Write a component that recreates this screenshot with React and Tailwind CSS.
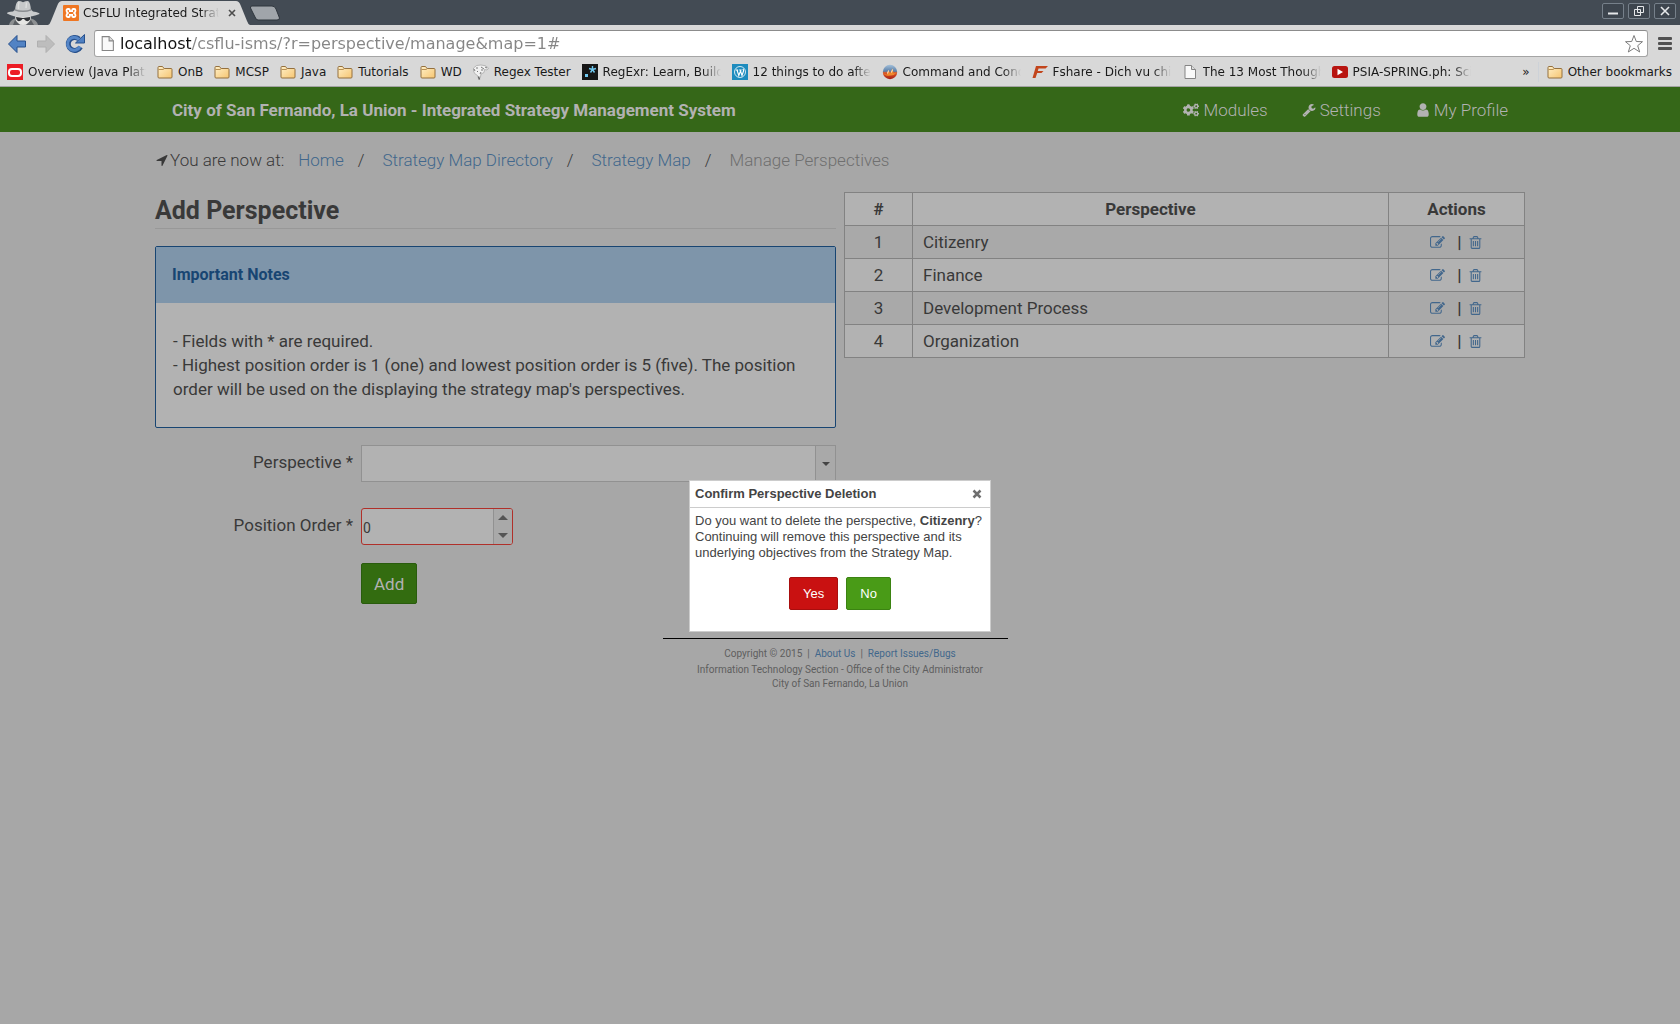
import { FaCogs } from "react-icons/fa";

const FA_PATHS = {
  user: "M1536 1399q0 109-62.5 187t-150.5 78h-854q-88 0-150.5-78t-62.5-187q0-85 8.5-160.5t31.5-152 58.5-131 94-89 134.5-34.5q131 128 313 128t313-128q76 0 134.5 34.5t94 89 58.5 131 31.5 152 8.5 160.5zm-256-887q0 159-112.5 271.5t-271.5 112.5-271.5-112.5-112.5-271.5 112.5-271.5 271.5-112.5 271.5 112.5 112.5 271.5z",
  trash: "M704 736v576q0 14-9 23t-23 9h-64q-14 0-23-9t-9-23v-576q0-14 9-23t23-9h64q14 0 23 9t9 23zm256 0v576q0 14-9 23t-23 9h-64q-14 0-23-9t-9-23v-576q0-14 9-23t23-9h64q14 0 23 9t9 23zm256 0v576q0 14-9 23t-23 9h-64q-14 0-23-9t-9-23v-576q0-14 9-23t23-9h64q14 0 23 9t9 23zm128 724v-948h-896v948q0 22 7 40.5t14.5 27 10.5 8.5h832q3 0 10.5-8.5t14.5-27 7-40.5zm-672-1076h448l-48-117q-7-9-17-11h-317q-10 2-17 11zm928 32v64q0 14-9 23t-23 9h-96v948q0 83-47 143.5t-113 60.5h-832q-66 0-113-58.5t-47-141.5v-952h-96q-14 0-23-9t-9-23v-64q0-14 9-23t23-9h309l70-167q15-37 54-63t79-26h320q40 0 79 26t54 63l70 167h309q14 0 23 9t9 23z",
  edit: "M888 1184l116-116-152-152-116 116v56h96v96h56zm440-720q-16-16-33 1l-350 350q-17 17-1 33t33-1l350-350q17-17 1-33zm80 594v190q0 119-84.5 203.5t-203.5 84.5h-832q-119 0-203.5-84.5t-84.5-203.5v-832q0-119 84.5-203.5t203.5-84.5h832q63 0 117 25 15 7 18 23 3 17-9 29l-49 49q-14 14-32 8-23-6-45-6h-832q-66 0-113 47t-47 113v832q0 66 47 113t113 47h832q66 0 113-47t47-113v-126q0-13 9-22l64-64q15-15 35-7t20 29zm-96-738l288 288-672 672h-288v-288zm444 132l-92 92-288-288 92-92q28-28 68-28t68 28l152 152q28 28 28 68t-28 68z",
  arrow: "M1593 349l-640 1280q-17 35-57 35-5 0-15-2-22-5-35.5-22.5t-13.5-39.5v-576h-576q-22 0-39.5-13.5t-22.5-35.5 4-42 29-30l1280-640q13-7 29-7 27 0 45 19 15 14 18.5 34.5t-6.5 39.5z",
  wrench: "M448 1472q0-26-19-45t-45-19-45 19-19 45 19 45 45 19 45-19 19-45zm644-420l-682 682q-37 37-90 37-52 0-91-37l-106-108q-38-36-38-90 0-53 38-91l681-681q39 98 114.5 173.5t173.5 114.5zm634-435q0 39-23 106-47 134-164.5 217.5t-258.5 83.5q-185 0-316.5-131.5t-131.5-316.5 131.5-316.5 316.5-131.5q58 0 121.5 16.5t107.5 46.5q16 11 16 28t-16 28l-293 169v224l193 107q5-3 79-48.5t135.5-81 70.5-35.5q15 0 23.5 10t8.5 25z",
};

function Fa({ name, className }) {
  return (
    <svg viewBox="0 0 1792 1792" fill="currentColor" aria-hidden="true" className={className}>
      <path d={FA_PATHS[name]} />
    </svg>
  );
}

function Incognito() {
  return (
    <svg viewBox="0 0 34 25" aria-hidden="true" className="h-[25px] w-[34px]">
      <path d="M3 25 Q4 20 9 18.500 L9 14 H25 V18.500 Q31 20 32 25 Z" fill="#8d9092" />
      <path d="M9.500 14 H24.500 V19 Q23 25 17 25 Q11 25 9.500 19 Z" fill="#e6e6e4" />
      <path d="M9 11 Q9.500 2 12.500 1 Q14.500 0.800 17 2.200 Q20 0.800 22 1 Q24.500 2 25 11 Z" fill="#c6c8c9" />
      <path d="M13 2 Q12 5 12.500 9 M20.500 2.500 L20 8" stroke="#dcdddd" strokeWidth="1.500" fill="none" />
      <path d="M8.500 10 Q17 12.500 25.500 10 L27 11.500 Q34 12.500 33.500 14 Q27 17 17 17 Q7 17 1 13.500 Q0.500 12 7 11.500 Z" fill="#c9cbcc" />
      <path d="M8.500 9 Q17 12 25.500 9 L25.500 10.500 Q17 13.500 8.500 10.500 Z" fill="#8a8d90" />
      <path d="M10 17 L17 18 L24 17 L24 19.500 Q22 22.500 19.500 20.500 L18 19 H16.500 L15 20.500 Q12 22.500 10.500 19.500 Z" fill="#2e3135" />
      <path d="M9 20 L14 25 H7 Z M25 20 L20 25 H28 Z" fill="#5b5f63" />
    </svg>
  );
}

function Xampp() {
  return (
    <svg viewBox="0 0 16 16" aria-hidden="true" className="size-4 shrink-0">
      <rect width="16" height="16" rx="1" fill="#ef7622" />
      <path d="M5 4 h0.800 q1 0 1 1 v1.200 h2.400 V5 q0-1 1-1 h1 q1.300 0 1.300 1.500 t-1.300 2.500 q1.300 1 1.300 2.500 t-1.300 1.500 h-1 q-1 0-1-1 V9.800 H6.800 V11 q0 1-1 1 H5 q-1.500 0-1.500-1.500 T4.800 8 Q3.500 7 3.500 5.500 T5 4 Z" fill="none" stroke="#fff" strokeWidth="1.800" />
    </svg>
  );
}

function Oracle() {
  return (
    <svg viewBox="0 0 16 16" aria-hidden="true" className="size-4 shrink-0">
      <rect width="16" height="16" fill="#ec1c24" />
      <rect x="2" y="5" width="12" height="7" rx="3" fill="none" stroke="#fff" strokeWidth="2" />
    </svg>
  );
}

function Folder() {
  return (
    <svg viewBox="0 0 16 16" aria-hidden="true" className="size-4 shrink-0">
      <defs>
        <linearGradient id="folderFill" x1="0" y1="0" x2="1" y2="1">
          <stop offset="0" stopColor="#fff0c8" />
          <stop offset="1" stopColor="#f6c571" />
        </linearGradient>
      </defs>
      <path d="M1 13 V3.500 Q1 2.500 2 2.500 H5.500 L7 4.500 H14 Q15 4.500 15 5.500 V13 Q15 14 14 14 H2 Q1 14 1 13 Z" fill="url(#folderFill)" stroke="#94703f" />
      <path d="M1.500 5.500 H6 L7.500 4.500" fill="none" stroke="#b88f52" />
    </svg>
  );
}

function PageIcon({ className = "size-4" }) {
  return (
    <svg viewBox="0 0 16 16" aria-hidden="true" className={`shrink-0 ${className}`}>
      <path d="M3 1.500 H9.500 L13.500 5.500 V14.500 H3 Z" fill="#f9f9f9" stroke="#858585" />
      <path d="M9.500 1.500 V5.500 H13.500" fill="#ddd" stroke="#858585" />
    </svg>
  );
}

function RegexTester() {
  return (
    <svg viewBox="0 0 16 16" aria-hidden="true" className="size-4 shrink-0">
      <path d="M0.500 4 Q3 0.500 8 1 Q13 1 15.500 4 L14 6 L11.500 5.500 L11 8.500 L8 10 L7.500 13 L6 15.500 L4.500 11.500 Q1 10 0.500 7 Z" fill="#f1f1f1" stroke="#a8a8a8" strokeWidth="0.800" />
      <path d="M3 4 h2 M8 3 l3 2 M4 7 l1 1 M8 6 h2 M1 5 l1 2 M8 8 l-1 2 M12 3 l2 1" stroke="#7a7a7a" fill="none" />
      <path d="M5.500 12.500 L6.500 15.500" stroke="#666" strokeWidth="1.500" />
    </svg>
  );
}

function RegExr() {
  return (
    <svg viewBox="0 0 16 16" aria-hidden="true" className="size-4 shrink-0">
      <rect width="16" height="16" fill="#161616" />
      <rect x="3" y="10" width="3" height="3" fill="#70c8ef" />
      <path d="M10.500 2 V5.500 L7 4.500 M10.500 5.500 L14 4.500 M10.500 5.500 L8.500 8.500 M10.500 5.500 L12.500 8.500" fill="none" stroke="#70c8ef" strokeWidth="1.400" />
    </svg>
  );
}

function WordPress() {
  return (
    <svg viewBox="0 0 16 16" aria-hidden="true" className="size-4 shrink-0">
      <rect width="16" height="16" fill="#1e8cbe" />
      <circle cx="8" cy="8" r="5.500" fill="none" stroke="#fff" strokeWidth="0.800" />
      <path d="M3.800 6 H6.200 M5 6 L6.800 11.500 L8.300 7.500 M7.200 6 H9.600 M8.400 6.500 L10 11.500 L11.600 6.800 Q11.600 5.800 10.800 5" fill="none" stroke="#fff" strokeWidth="1.100" />
    </svg>
  );
}

function CommandIcon() {
  return (
    <svg viewBox="0 0 16 16" aria-hidden="true" className="size-4 shrink-0">
      <defs>
        <linearGradient id="ballFill" x1="0" y1="0" x2="0" y2="1">
          <stop offset="0" stopColor="#a3c0da" />
          <stop offset="0.450" stopColor="#5b7fa8" />
          <stop offset="0.550" stopColor="#dd5a26" />
          <stop offset="1" stopColor="#a81e14" />
        </linearGradient>
      </defs>
      <circle cx="8" cy="8" r="7.200" fill="url(#ballFill)" />
      <path d="M1.500 9 Q3 11 5 10.500 L6.500 6 L8 9.500 L10.500 4.500 L11.500 9.500 L14.500 8.500 Q12 12 8 11.500 Q3 12.500 1.500 9 Z" fill="#f08a2c" />
      <path d="M5.500 9.500 L6.500 6.500 M9.500 8.500 L10.500 5.500" stroke="#fdf0d8" />
    </svg>
  );
}

function Fshare() {
  return (
    <svg viewBox="0 0 16 16" aria-hidden="true" className="size-4 shrink-0">
      <path d="M4 2 H16 L13.500 4.500 H6.500 L5.800 7 H11.500 L9.500 9 H5.200 L3.500 14 H0.500 Z" fill="#c2451c" />
    </svg>
  );
}

function YouTube() {
  return (
    <svg viewBox="0 0 16 16" aria-hidden="true" className="size-4 shrink-0">
      <rect y="2" width="16" height="12" rx="2.500" fill="#b81410" />
      <path d="M5.500 4.800 L11 8 L5.500 11.200 Z" fill="#fff" />
    </svg>
  );
}

const BOOKMARKS = [
  { label: "Overview (Java Platf", Icon: Oracle, long: true },
  { label: "OnB", Icon: Folder },
  { label: "MCSP", Icon: Folder },
  { label: "Java", Icon: Folder },
  { label: "Tutorials", Icon: Folder },
  { label: "WD", Icon: Folder },
  { label: "Regex Tester", Icon: RegexTester },
  { label: "RegExr: Learn, Build", Icon: RegExr, long: true },
  { label: "12 things to do after", Icon: WordPress, long: true },
  { label: "Command and Conq", Icon: CommandIcon, long: true },
  { label: "Fshare - Dich vu chi", Icon: Fshare, long: true },
  { label: "The 13 Most Though", Icon: PageIcon, long: true },
  { label: "PSIA-SPRING.ph: Sci", Icon: YouTube, long: true },
];

function Bookmark({ label, Icon, long }) {
  return (
    <a href="#" className="flex shrink-0 items-center gap-[5px]">
      <Icon />
      <span
        className={
          long
            ? "w-[118px] overflow-hidden whitespace-nowrap [mask-image:linear-gradient(to_right,#000_85%,transparent)]"
            : "whitespace-nowrap"
        }
      >
        {label}
      </span>
    </a>
  );
}

function WindowButton({ label, children }) {
  return (
    <button type="button" aria-label={label} className="flex h-4 w-[22px] items-center justify-center rounded-[2px] border border-[#76808a] bg-[#3d454e]">
      <svg viewBox="0 0 12 12" fill="none" stroke="#e6e8ea" aria-hidden="true" className="size-3">
        {children}
      </svg>
    </button>
  );
}

function BlueArrow({ forward }) {
  return (
    <svg viewBox="0 0 20 20" aria-hidden="true" className="size-5">
      <path
        d={forward ? "M1.500 7 H10 V1.500 L18.500 10 L10 18.500 V13 H1.500 Z" : "M18.500 7 H10 V1.500 L1.500 10 L10 18.500 V13 H18.500 Z"}
        fill={forward ? "#bdbdbd" : "#5283c4"}
        stroke={forward ? "#b0b0b0" : "#27508c"}
      />
    </svg>
  );
}

function Browser() {
  return (
    <div className="bg-[#d8d8d8] font-['DejaVu_Sans',sans-serif] text-[12px] leading-4 text-[#1a1a1a]">
      <div className="flex h-[25px] items-start bg-[#434b54]">
        <div className="ml-[6px] w-[42px]">
          <Incognito />
        </div>
        <div className="flex h-[25px] pt-px">
          <svg viewBox="0 0 14 24" preserveAspectRatio="none" aria-hidden="true" className="h-6 w-[14px]">
            <path d="M0 24 Q2 23 3 20 L9.500 4 Q11 0 14 0 V24 Z" fill="#d8d8d8" />
          </svg>
          <div className="flex items-center gap-1 bg-[#d8d8d8] pl-px">
            <Xampp />
            <span className="w-[136px] overflow-hidden whitespace-nowrap [mask-image:linear-gradient(to_right,#000_86%,transparent)]">CSFLU Integrated Strat</span>
            <button type="button" aria-label="Close tab" className="ml-[5px] flex size-2 items-center justify-center">
              <svg viewBox="0 0 8 8" stroke="#4c4c4c" strokeWidth="1.600" aria-hidden="true" className="size-2">
                <path d="M1 1 L7 7 M7 1 L1 7" />
              </svg>
            </button>
          </div>
          <svg viewBox="0 0 14 24" preserveAspectRatio="none" aria-hidden="true" className="h-6 w-[14px]">
            <path d="M14 24 Q12 23 11 20 L4.500 4 Q3 0 0 0 V24 Z" fill="#d8d8d8" />
          </svg>
        </div>
        <button type="button" aria-label="New tab" className="mt-[5px]">
          <svg viewBox="0 0 30 16" aria-hidden="true" className="h-4 w-[30px]">
            <path d="M2 1 H22 Q25 1 26 4 L29.500 13 Q29.500 15 27 15 H8 Q6 15 5 12 L0.500 3 Q0 1 2 1 Z" fill="#a0a5aa" stroke="#2f363d" />
          </svg>
        </button>
        <div className="mt-[3px] mr-1 ml-auto flex gap-1">
          <WindowButton label="Minimize">
            <path d="M1 8.500 H11" strokeWidth="2" />
          </WindowButton>
          <WindowButton label="Restore">
            <path d="M4.500 1.500 H10.500 V7.500 H4.500 Z M1.500 4.500 H7.500 V10.500 H1.500 Z" />
          </WindowButton>
          <WindowButton label="Close">
            <path d="M2 2 L10 10 M10 2 L2 10" strokeWidth="1.600" />
          </WindowButton>
        </div>
      </div>
      <div className="flex items-center pt-[5px] pr-2 pl-[7px]">
        <div className="flex items-center gap-[9px]">
          <button type="button" aria-label="Back"><BlueArrow /></button>
          <button type="button" aria-label="Forward"><BlueArrow forward /></button>
          <button type="button" aria-label="Reload">
            <svg viewBox="0 0 20 20" aria-hidden="true" className="size-5">
              <path d="M15.500 13 A6.500 6.500 0 1 1 14 5" fill="none" stroke="#27508c" strokeWidth="5" />
              <path d="M19.500 0.500 V9 H10.500 Z" fill="#4f80c2" stroke="#27508c" />
              <path d="M15 12.500 A6.500 6.500 0 1 1 14 5.500" fill="none" stroke="#5586c7" strokeWidth="3" />
            </svg>
          </button>
        </div>
        <div className="ml-[9px] flex h-[27px] min-w-0 flex-1 items-center rounded-[3px] border border-[#a5a5a5] border-t-[#8c8c8c] bg-white pr-[3px] pl-1">
          <PageIcon className="size-[17px]" />
          <input
            aria-label="Address"
            defaultValue="localhost/csflu-isms/?r=perspective/manage&map=1#"
            className="ml-1 min-w-0 flex-1 bg-[linear-gradient(to_right,#111_71px,#858585_71px)] bg-clip-text text-[16px] leading-6 text-transparent outline-none"
          />
          <button type="button" aria-label="Bookmark this page">
            <svg viewBox="0 0 20 20" aria-hidden="true" className="size-5">
              <path d="M10 1.500 L12.300 7.500 L18.500 7.700 L13.700 11.700 L15.700 18 L10 14.300 L4.300 18 L6.300 11.700 L1.500 7.700 L7.700 7.500 Z" fill="#fff" stroke="#7c7c7c" strokeLinejoin="round" />
            </svg>
          </button>
        </div>
        <button type="button" aria-label="Menu" className="ml-[10px] flex w-[14px] flex-col gap-[2px]">
          <span className="h-[3px] rounded-[1px] bg-[#515151]" />
          <span className="h-[3px] rounded-[1px] bg-[#515151]" />
          <span className="h-[3px] rounded-[1px] bg-[#515151]" />
        </button>
      </div>
      <div className="flex h-[30px] items-center gap-[11px] border-b border-[#a3a3a3] pr-2 pl-[7px]">
        {BOOKMARKS.map((b) => (
          <Bookmark key={b.label} {...b} />
        ))}
        <div className="ml-auto flex items-center gap-2">
          <button type="button" aria-label="More bookmarks">»</button>
          <span className="h-5 w-px bg-[#cdd2d8]" />
          <Bookmark label="Other bookmarks" Icon={Folder} />
        </div>
      </div>
    </div>
  );
}

const CRUMBS = ["Home", "Strategy Map Directory", "Strategy Map"];
const PERSPECTIVES = ["Citizenry", "Finance", "Development Process", "Organization"];
const CELL = "border border-[#828282]";

function Dialog() {
  return (
    <div
      role="dialog"
      aria-labelledby="dialog-title"
      className="absolute top-[480px] left-1/2 w-[302px] -translate-x-1/2 border border-[#cccccc] bg-white font-['Liberation_Sans',Arial,sans-serif] text-[13px] leading-4 text-[#444444]"
    >
      <div className="flex h-[27px] items-center justify-between border-b border-[#cccccc] pr-2 pl-[5px]">
        <h2 id="dialog-title" className="font-bold">Confirm Perspective Deletion</h2>
        <button type="button" aria-label="Close" className="flex size-[10px] items-center justify-center">
          <svg viewBox="0 0 10 10" stroke="#6f6f6f" strokeWidth="2.500" aria-hidden="true" className="size-[10px]">
            <path d="M1.500 1.500 L8.500 8.500 M8.500 1.500 L1.500 8.500" />
          </svg>
        </button>
      </div>
      <p className="px-[5px] pt-[5px]">
        Do you want to delete the perspective, <strong>Citizenry</strong>? Continuing will remove this perspective and its underlying objectives from the Strategy Map.
      </p>
      <div className="flex justify-center gap-2 pt-4 pb-[21px] text-white">
        <button type="button" className="h-[33px] rounded-[2px] border border-[#a80e0e] bg-[#c91111] px-[13px]">Yes</button>
        <button type="button" className="h-[33px] rounded-[2px] border border-[#3b8312] bg-[#499b17] px-[13px]">No</button>
      </div>
    </div>
  );
}

export default function App() {
  return (
    <div className="relative min-h-screen bg-[#a7a7a7] font-[Roboto,sans-serif] text-[17px] leading-6 text-[#393939]">
      <Browser />
      <header className="bg-[#356718] text-[#b2b2b2]">
        <div className="mx-auto flex h-[45px] max-w-[1370px] items-center justify-between px-[17px]">
          <h1 className="font-bold">City of San Fernando, La Union - Integrated Strategy Management System</h1>
          <nav className="flex gap-[34px] font-light">
            <a href="#" className="flex items-center gap-1"><FaCogs className="size-4" />Modules</a>
            <a href="#" className="flex items-center gap-1"><Fa name="wrench" className="size-[14px]" />Settings</a>
            <a href="#" className="flex items-center gap-[3px]"><Fa name="user" className="size-4" />My Profile</a>
          </nav>
        </div>
      </header>

      <main className="mx-auto max-w-[1370px]">
        <nav aria-label="Breadcrumb" className="flex items-center pt-4 font-light">
          <Fa name="arrow" className="mr-px size-[14px]" />
          <span className="mr-[14px]">You are now at:</span>
          {CRUMBS.map((c) => (
            <span key={c} className="flex">
              <a href="#" className="text-[#42678c]">{c}</a>
              <span className="mr-[18px] ml-[14px]">/</span>
            </span>
          ))}
          <span className="text-[#6f6f6f]">Manage Perspectives</span>
        </nav>

        <div className="grid grid-cols-2 items-start gap-2 pt-5">
          <section>
            <h2 className="border-b border-[#989898] pt-1 pb-[2px] text-[25px] leading-[30px] font-bold">Add Perspective</h2>
            <div className="mt-[17px] rounded-[2px] border border-[#184572] bg-[#b2b2b2]">
              <h3 className="bg-[#7e95aa] px-4 py-4 text-[16px] leading-6 font-bold text-[#184572]">Important Notes</h3>
              <p className="px-[17px] pt-[26px] pb-[26px]">
                - Fields with * are required.
                <br />- Highest position order is 1 (one) and lowest position order is 5 (five). The position order will be used on the displaying the strategy map's perspectives.
              </p>
            </div>

            <form className="mt-[17px] grid grid-cols-[198px_1fr] gap-x-2">
              <label htmlFor="perspective" className="pt-[5px] text-right">Perspective *</label>
              <div className="flex h-[37px] border border-[#919191] bg-[#b2b2b2]">
                <input id="perspective" className="min-w-0 flex-1 px-1 outline-none" />
                <button type="button" aria-label="Show perspectives" className="flex w-5 items-center justify-center border-l border-[#919191] bg-[#a9a9a9]">
                  <svg viewBox="0 0 8 4" fill="#444" aria-hidden="true" className="h-1 w-2"><path d="M0 0 H8 L4 4 Z" /></svg>
                </button>
              </div>
              <label htmlFor="position" className="mt-[26px] pt-[5px] text-right">Position Order *</label>
              <div className="mt-[26px] flex h-[37px] w-[152px] overflow-hidden rounded-[3px] border border-[#b0302a] bg-[#b2b2b2]">
                <input id="position" defaultValue="0" inputMode="numeric" className="min-w-0 flex-1 pt-[3px] pl-px text-[14px] outline-none" />
                <div className="flex w-[19px] flex-col items-center justify-between border-l border-[#919191] bg-[#a9a9a9] py-[6px]">
                  <button type="button" aria-label="Increase" className="flex"><svg viewBox="0 0 10 5" fill="#555" aria-hidden="true" className="h-[5px] w-[10px]"><path d="M0 5 H10 L5 0 Z" /></svg></button>
                  <button type="button" aria-label="Decrease" className="flex"><svg viewBox="0 0 10 5" fill="#555" aria-hidden="true" className="h-[5px] w-[10px]"><path d="M0 0 H10 L5 5 Z" /></svg></button>
                </div>
              </div>
              <button type="button" className="col-start-2 mt-[18px] h-[41px] justify-self-start rounded-[2px] border border-[#295c0d] bg-[#336c10] px-3 text-[#b2b2b2]">Add</button>
            </form>
          </section>

          <table className="w-full table-fixed border-collapse">
            <colgroup>
              <col className="w-[10%]" />
              <col className="w-[70%]" />
              <col className="w-[20%]" />
            </colgroup>
            <thead>
              <tr className="h-[33px] bg-[#b2b2b2]">
                <th className={CELL}>#</th>
                <th className={CELL}>Perspective</th>
                <th className={CELL}>Actions</th>
              </tr>
            </thead>
            <tbody>
              {PERSPECTIVES.map((p, i) => (
                <tr key={p} className="h-[33px] bg-[#b2b2b2] odd:bg-[#a9a9a9]">
                  <td className={`${CELL} text-center`}>{i + 1}</td>
                  <td className={`${CELL} px-[10px]`}>{p}</td>
                  <td className={CELL}>
                    <div className="flex items-center justify-center text-[#42678c]">
                      <a href="#" aria-label={`Edit ${p}`}><Fa name="edit" className="size-[15px]" /></a>
                      <span className="mr-[6px] ml-3 font-bold text-[#393939]">|</span>
                      <a href="#" aria-label={`Delete ${p}`}><Fa name="trash" className="size-[15px]" /></a>
                    </div>
                  </td>
                </tr>
              ))}
            </tbody>
          </table>
        </div>
      </main>

      <footer className="mx-auto mt-[34px] w-[355px] text-center text-[10px] leading-[14px] text-[#5e5e5e]">
        <hr className="mb-2 w-[345px] border-black" />
        <p>
          Copyright © 2015 &nbsp;|&nbsp; <a href="#" className="text-[#42678c]">About Us</a> &nbsp;|&nbsp; <a href="#" className="text-[#42678c]">Report Issues/Bugs</a>
        </p>
        <p className="pt-[2px]">Information Technology Section - Office of the City Administrator</p>
        <p>City of San Fernando, La Union</p>
      </footer>

      <Dialog />
    </div>
  );
}
